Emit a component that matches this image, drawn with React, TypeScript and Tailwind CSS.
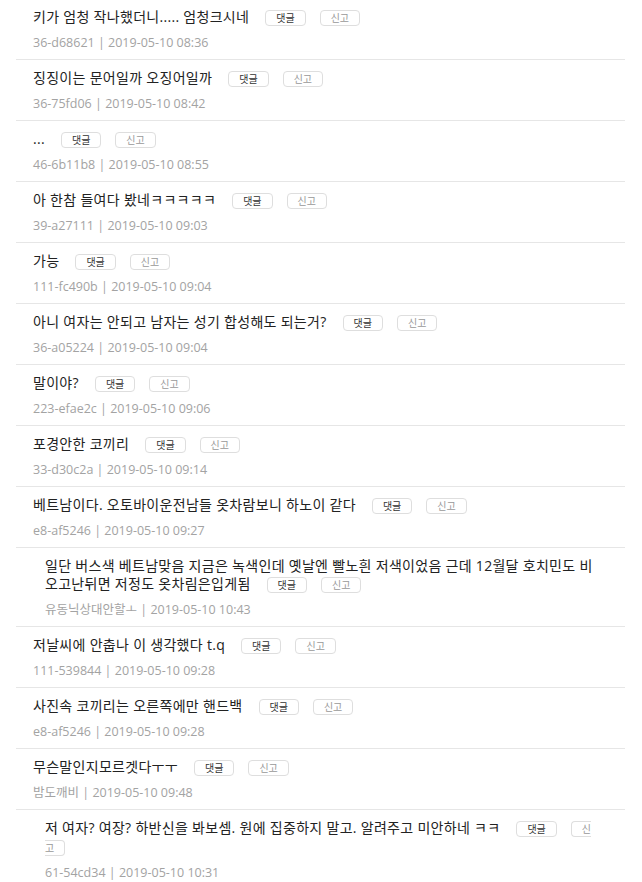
type Comment = {
  text: string;
  author: string;
  date: string;
  reply?: boolean;
};

const comments: Comment[] = [
  { text: "키가 엄청 작나했더니..... 엄청크시네", author: "36-d68621", date: "2019-05-10 08:36" },
  { text: "징징이는 문어일까 오징어일까", author: "36-75fd06", date: "2019-05-10 08:42" },
  { text: "...", author: "46-6b11b8", date: "2019-05-10 08:55" },
  { text: "아 한참 들여다 봤네ㅋㅋㅋㅋㅋ", author: "39-a27111", date: "2019-05-10 09:03" },
  { text: "가능", author: "111-fc490b", date: "2019-05-10 09:04" },
  { text: "아니 여자는 안되고 남자는 성기 합성해도 되는거?", author: "36-a05224", date: "2019-05-10 09:04" },
  { text: "말이야?", author: "223-efae2c", date: "2019-05-10 09:06" },
  { text: "포경안한 코끼리", author: "33-d30c2a", date: "2019-05-10 09:14" },
  { text: "베트남이다. 오토바이운전남들 옷차람보니 하노이 같다", author: "e8-af5246", date: "2019-05-10 09:27" },
  {
    text: "일단 버스색 베트남맞음 지금은 녹색인데 옛날엔 빨노흰 저색이었음 근데 12월달 호치민도 비오고난뒤면 저정도 옷차림은입게됨",
    author: "유동닉상대안할ㅗ",
    date: "2019-05-10 10:43",
    reply: true,
  },
  { text: "저날씨에 안춥나 이 생각했다 t.q", author: "111-539844", date: "2019-05-10 09:28" },
  { text: "사진속 코끼리는 오른쪽에만 핸드백", author: "e8-af5246", date: "2019-05-10 09:28" },
  { text: "무슨말인지모르겟다ㅜㅜ", author: "밤도깨비", date: "2019-05-10 09:48" },
  {
    text: "저 여자? 여장? 하반신을 봐보셈. 원에 집중하지 말고. 알려주고 미안하네 ㅋㅋ",
    author: "61-54cd34",
    date: "2019-05-10 10:31",
    reply: true,
  },
];

const ActionButton = ({ label, muted }: { label: string; muted?: boolean }) => (
  <span
    className={
      muted
        ? "ml-[14px] rounded-[4px] border border-[#dedede] bg-white px-[10px] py-0 text-[10px] tracking-normal text-[#999]"
        : "ml-[16px] rounded-[4px] border border-[#dedede] bg-white px-[10px] py-0 text-[10px] tracking-normal text-[#333]"
    }
  >
    {label}
  </span>
);

export default function App() {
  return (
    <div className="min-h-screen overflow-hidden bg-white font-['Open_Sans','Noto_Sans_CJK_KR',sans-serif]">
      <ul className="-mt-px ml-4 mr-[17px]">
        {comments.map((c, i) => (
          <li
            key={i}
            className={
              c.reply
                ? "border-b border-[#e6e6e6] pb-[7px] pl-[29px] pr-6 pt-[9px]"
                : "border-b border-[#e6e6e6] pb-[7px] pl-[17px] pr-6 pt-[9px]"
            }
          >
            <p className="text-[14px] leading-[18px] tracking-[0.3px] text-[#222]">
              {c.text}
              <ActionButton label="댓글" />
              <ActionButton label="신고" muted />
            </p>
            <p className="mt-[7px] text-[12.5px] leading-[18px] text-[#a3a3a3]">
              {c.author} | {c.date}
            </p>
          </li>
        ))}
      </ul>
    </div>
  );
}
